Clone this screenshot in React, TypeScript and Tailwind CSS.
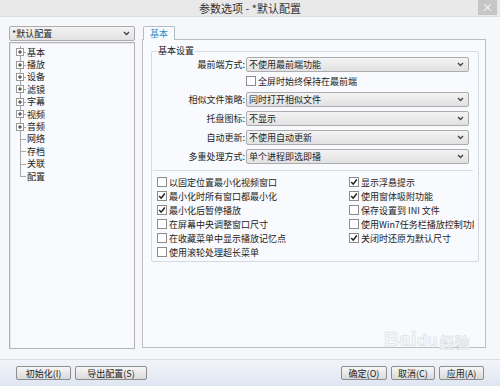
import React from 'react';

const treeItems = [
  { label: '基本', hasChildren: true },
  { label: '播放', hasChildren: true },
  { label: '设备', hasChildren: true },
  { label: '滤镜', hasChildren: true },
  { label: '字幕', hasChildren: true },
  { label: '视频', hasChildren: true },
  { label: '音频', hasChildren: true },
  { label: '网络', hasChildren: false },
  { label: '存档', hasChildren: false },
  { label: '关联', hasChildren: false },
  { label: '配置', hasChildren: false },
];

const leftChecks = [
  { label: '以固定位置最小化视频窗口', checked: false },
  { label: '最小化时所有窗口都最小化', checked: true },
  { label: '最小化后暂停播放', checked: true },
  { label: '在屏幕中央调整窗口尺寸', checked: false },
  { label: '在收藏菜单中显示播放记忆点', checked: false },
  { label: '使用滚轮处理超长菜单', checked: false },
];

const rightChecks = [
  { label: '显示浮悬提示', checked: true },
  { label: '使用窗体吸附功能', checked: true },
  { label: '保存设置到 INI 文件', checked: false },
  { label: '使用Win7任务栏播放控制功能', checked: false },
  { label: '关闭时还原为默认尺寸', checked: true },
  null,
];

function Chevron() {
  return (
    <svg width="7" height="5" viewBox="0 0 7 5" className="shrink-0">
      <polyline points="1,1 3.5,3.5 6,1" fill="none" stroke="#404040" strokeWidth="1.3" />
    </svg>
  );
}

function Select({ value, className = '' }: { value: string; className?: string }) {
  return (
    <div
      className={`h-[15px] border border-[#acacac] rounded-[2px] bg-linear-to-b from-[#f4f4f4] to-[#e1e1e1] flex items-center justify-between pl-[2px] pr-[4px] text-[9px] leading-none text-[#1e1e1e] ${className}`}
    >
      <span>{value}</span>
      <Chevron />
    </div>
  );
}

function CheckBox({ label, checked }: { label: string; checked: boolean }) {
  return (
    <div className="flex items-center h-[14px] whitespace-nowrap overflow-hidden">
      <div className="w-[10px] h-[10px] shrink-0 border border-[#8c8c8c] bg-white flex items-center justify-center">
        {checked && (
          <svg width="8" height="8" viewBox="0 0 8 8">
            <polyline points="1.2,4 3.2,6.2 6.8,1.5" fill="none" stroke="#222" strokeWidth="1.5" />
          </svg>
        )}
      </div>
      <span className="ml-[2px] text-[9px] leading-none text-[#222]">{label}</span>
    </div>
  );
}

function FormRow({ label, value, className = '' }: { label: string; value: string; className?: string }) {
  return (
    <div className={`flex items-center h-[15px] ${className}`}>
      <div className="w-[93px] text-right text-[9px] leading-none text-[#222]">{label}</div>
      <Select value={value} className="ml-[1px] w-[223px]" />
    </div>
  );
}

function PlusBox() {
  return (
    <svg width="8" height="8" viewBox="0 0 8 8" className="absolute left-[6px] top-1/2 -translate-y-1/2">
      <rect x="0.5" y="0.5" width="7" height="7" fill="#fff" stroke="#9a9a9a" />
      <line x1="2" y1="4" x2="6" y2="4" stroke="#333" />
      <line x1="4" y1="2" x2="4" y2="6" stroke="#333" />
    </svg>
  );
}

function Button({ label, w }: { label: string; w: string }) {
  return (
    <div
      className={`${w} h-[14px] border border-[#8d8d8d] rounded-[2px] bg-linear-to-b from-[#f7f7f7] to-[#d9d9d9] flex items-center justify-center text-[9px] leading-none text-[#222]`}
    >
      {label}
    </div>
  );
}

export default function App() {
  return (
    <div className="w-[500px] h-[386px] bg-[#f5f7fb] flex flex-col relative overflow-hidden font-['Noto_Sans_CJK_SC','Microsoft_YaHei',sans-serif]">
      {/* title bar */}
      <div className="h-[17px] shrink-0 bg-[#e9e9e9] border-b border-[#dedede] flex items-center justify-center relative text-[11px] leading-none text-[#333]">
        参数选项 - *默认配置
        <div className="absolute right-[3px] top-0 w-[19px] h-[15px] bg-[#c6c6c6] flex items-center justify-center text-white text-[11px]">
          ×
        </div>
      </div>

      {/* main */}
      <div className="flex flex-1 pl-[9px] pt-[9px]">
        {/* left column */}
        <div className="w-[126px] flex flex-col">
          <Select value="*默认配置" className="w-full" />
          <div className="mt-[1px] h-[307px] border border-[#b3b3b3] bg-[#f9fafd] shadow-[inset_1px_1px_0_#e6e6e6] pt-[3px]">
            {treeItems.map((item, i) => (
              <div key={item.label} className="flex items-center h-[12.4px]">
                <div className="relative w-[17px] h-full shrink-0">
                  <div
                    className={`absolute left-[10px] top-0 border-l border-[#a8a8a8] ${
                      i === treeItems.length - 1 ? 'h-1/2' : 'h-full'
                    }`}
                  />
                  <div className="absolute left-[10px] top-1/2 w-[6px] border-t border-[#a8a8a8]" />
                  {item.hasChildren && <PlusBox />}
                </div>
                <span className="text-[9px] leading-none text-[#222]">{item.label}</span>
              </div>
            ))}
          </div>
        </div>

        {/* right column */}
        <div className="ml-[7px] w-[344px] flex flex-col">
          <div className="flex">
            <div className="ml-[1px] -mb-px relative z-10 w-[32px] h-[14px] border border-b-0 border-[#b4bcc6] rounded-t-[2px] bg-[#f8fafd] flex items-center justify-center text-[9px] leading-none text-[#2f8fc4]">
              基本
            </div>
          </div>
          <div className="h-[309px] border border-[#bdbdbd] bg-[#f8fafd] pl-[8px] pt-[11px]">
            <div className="relative w-[328px] border border-[#d3dae3] rounded-[2px] pt-[5px] pb-[2px]">
              <div className="absolute left-[5px] -top-[7px] px-[1px] bg-[#f8fafd] text-[9px] leading-[12px] text-[#222]">
                基本设置
              </div>
              <FormRow label="最前端方式:" value="不使用最前端功能" />
              <div className="mt-[3px] h-[12px] ml-[94px] flex items-center">
                <CheckBox label="全屏时始终保持在最前端" checked={false} />
              </div>
              <FormRow label="相似文件策略:" value="同时打开相似文件" className="mt-[5px]" />
              <FormRow label="托盘图标:" value="不显示" className="mt-[4px]" />
              <FormRow label="自动更新:" value="不使用自动更新" className="mt-[4px]" />
              <FormRow label="多重处理方式:" value="单个进程即选即播" className="mt-[4px]" />
              <div className="mt-[6px] ml-[1px] mr-[5px] border-t border-[#d6dce4]" />
              <div className="mt-[4px] pl-[5px] grid grid-cols-[192px_125px]">
                {leftChecks.map((c, i) => (
                  <React.Fragment key={c.label}>
                    <CheckBox label={c.label} checked={c.checked} />
                    {rightChecks[i] ? (
                      <CheckBox label={rightChecks[i]!.label} checked={rightChecks[i]!.checked} />
                    ) : (
                      <div className="h-[14px]" />
                    )}
                  </React.Fragment>
                ))}
              </div>
            </div>
          </div>
        </div>
      </div>

      {/* bottom bar */}
      <div className="h-[27px] shrink-0 border-t border-[#d9dde4] bg-linear-to-b from-[#f1f4f9] to-[#dfe6f2] flex items-center justify-between pl-[16px] pr-[16px]">
        <div className="flex gap-[4px]">
          <Button label="初始化(I)" w="w-[55px]" />
          <Button label="导出配置(S)" w="w-[72px]" />
        </div>
        <div className="flex gap-[4px]">
          <Button label="确定(O)" w="w-[46px]" />
          <Button label="取消(C)" w="w-[44px]" />
          <Button label="应用(A)" w="w-[45px]" />
        </div>
      </div>

      {/* watermark */}
      <div className="absolute left-[384px] top-[328px] flex items-end text-[21px] font-bold leading-none text-[#f4f6f9] [-webkit-text-stroke:0.5px_#d6dae0] font-['Liberation_Sans',sans-serif] pointer-events-none">
        <span>Bai</span>
        <span className="text-[17px]">du</span>
        <span className="ml-[2px] text-[15px] font-['Noto_Sans_CJK_SC',sans-serif]">经验</span>
      </div>
    </div>
  );
}
